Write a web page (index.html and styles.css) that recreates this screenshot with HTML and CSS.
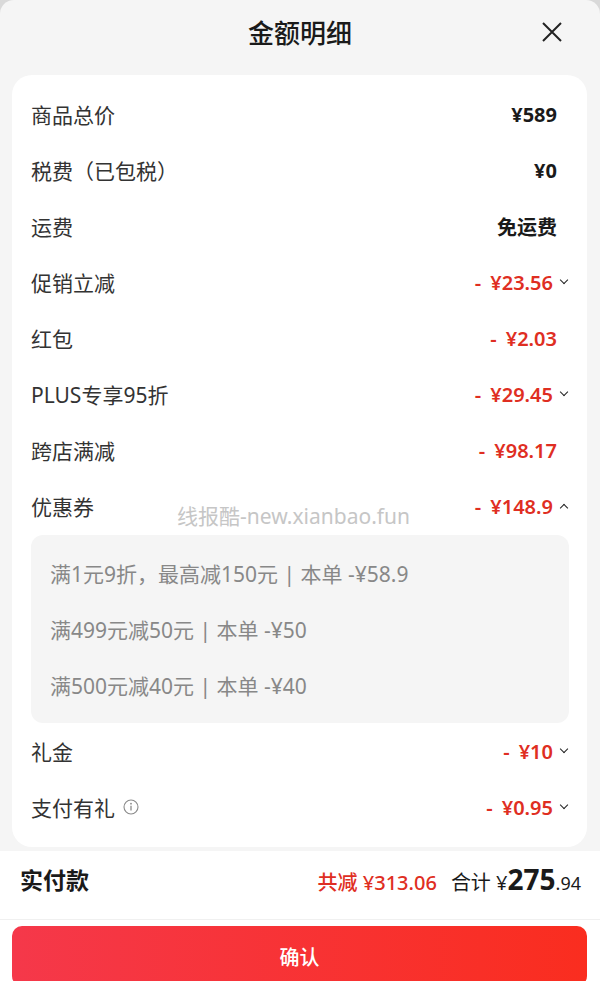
FILE: index.html
```html
<!DOCTYPE html>
<html lang="zh-CN">
<head>
  <meta charset="UTF-8">
  <title>金额明细</title>
  <link rel="stylesheet" href="styles.css">
</head>
<body>
  <div class="sheet">
    <div class="header">
      <h1>金额明细</h1>
      <span class="close">
        <svg width="22" height="22" viewBox="0 0 22 22"><path d="M2 2L20 20M20 2L2 20" stroke="#222" stroke-width="2" fill="none"/></svg>
      </span>
    </div>

    <div class="card">
      <div class="row">
        <span class="label">商品总价</span>
        <span class="value">¥589</span>
      </div>
      <div class="row">
        <span class="label">税费（已包税）</span>
        <span class="value">¥0</span>
      </div>
      <div class="row">
        <span class="label">运费</span>
        <span class="value">免运费</span>
      </div>
      <div class="row">
        <span class="label">促销立减</span>
        <span class="value red"><em>-</em>¥23.56<i class="arrow down"></i></span>
      </div>
      <div class="row">
        <span class="label">红包</span>
        <span class="value red"><em>-</em>¥2.03</span>
      </div>
      <div class="row">
        <span class="label">PLUS专享95折</span>
        <span class="value red"><em>-</em>¥29.45<i class="arrow down"></i></span>
      </div>
      <div class="row">
        <span class="label">跨店满减</span>
        <span class="value red"><em>-</em>¥98.17</span>
      </div>
      <div class="row">
        <span class="label">优惠券</span>
        <span class="value red"><em>-</em>¥148.9<i class="arrow up"></i></span>
      </div>
      <div class="coupons">
        <div class="coupon">满1元9折，最高减150元 | 本单 -¥58.9</div>
        <div class="coupon">满499元减50元 | 本单 -¥50</div>
        <div class="coupon">满500元减40元 | 本单 -¥40</div>
      </div>
      <div class="row">
        <span class="label">礼金</span>
        <span class="value red"><em>-</em>¥10<i class="arrow down"></i></span>
      </div>
      <div class="row">
        <span class="label">支付有礼
          <svg class="info" width="16" height="16" viewBox="0 0 16 16"><circle cx="8" cy="8" r="7" stroke="#8a8a8a" stroke-width="1.1" fill="none"/><circle cx="8" cy="4.7" r="0.9" fill="#8a8a8a"/><path d="M8 6.8V11.6" stroke="#8a8a8a" stroke-width="1.3"/></svg>
        </span>
        <span class="value red"><em>-</em>¥0.95<i class="arrow down"></i></span>
      </div>
      <div class="watermark">线报酷-new.xianbao.fun</div>
    </div>

    <div class="footer">
      <div class="total">
        <span class="total-title">实付款</span>
        <span class="total-right">
          <span class="saved">共减 ¥313.06</span>
          <span class="sum">合计 ¥<b>275</b><small>.94</small></span>
        </span>
      </div>
      <button class="confirm">确认</button>
    </div>
  </div>
</body>
</html>
```

FILE: styles.css
```css
body {
  margin: 0;
  background: #d9d9d9;
  font-family: 'Noto Sans', 'Noto Sans CJK SC', sans-serif;
  color: #222;
}
.sheet {
  background: #f5f5f5;
  border-radius: 14px 14px 0 0;
  height: 981px;
  overflow: hidden;
}
.header {
  height: 63px;
  margin-bottom: 12px;
  display: flex;
  align-items: center;
  justify-content: center;
  position: relative;
}
.header h1 {
  margin: 0;
  font-size: 26px;
  font-weight: 500;
  color: #1a1a1a;
}
.close {
  position: absolute;
  right: 37px;
  top: 21px;
  line-height: 0;
}
.card {
  position: relative;
  background: #fff;
  margin: 0 13px 4px 12px;
  border-radius: 20px;
  padding: 11px 18px 12px 19px;
}
.row {
  height: 56px;
  display: flex;
  align-items: center;
  justify-content: space-between;
}
.label {
  font-size: 21px;
  color: #333;
  display: flex;
  align-items: center;
}
.info {
  margin-left: 8px;
}
.value {
  font-size: 20px;
  font-weight: 700;
  color: #1a1a1a;
  margin-right: 12px;
  display: flex;
  align-items: center;
}
.value.red {
  color: #df2e22;
  font-weight: 600;
}
.value em {
  font-style: normal;
  margin-right: 9px;
}
.arrow {
  width: 5px;
  height: 5px;
  border-right: 1.6px solid #222;
  border-bottom: 1.6px solid #222;
  margin-left: 8px;
  margin-right: -16px;
}
.arrow.down {
  transform: rotate(45deg);
  margin-top: -5px;
}
.arrow.up {
  transform: rotate(-135deg);
  margin-top: 3px;
}
.value:has(.arrow) {
  margin-right: 18px;
}
.coupons {
  background: #f5f5f5;
  border-radius: 12px;
  padding: 10px 19px;
  margin: 1px 0 0;
}
.coupon {
  height: 56px;
  display: flex;
  align-items: center;
  font-size: 21px;
  color: #888;
}
.watermark {
  position: absolute;
  left: 165px;
  top: 425px;
  font-size: 21px;
  color: #c6c6c6;
}
.footer {
  background: #fff;
}
.total {
  height: 56px;
  padding: 0 19px 12px 20px;
  border-bottom: 1px solid #f0f0f0;
  display: flex;
  align-items: center;
  justify-content: space-between;
}
.total-title {
  font-size: 23px;
  font-weight: 700;
  color: #1a1a1a;
}
.total-right {
  display: flex;
  align-items: baseline;
}
.saved {
  color: #df2e22;
  font-size: 20px;
  font-weight: 500;
  margin-right: 14px;
}
.sum {
  font-size: 20px;
  color: #1a1a1a;
}
.sum b {
  font-size: 28px;
  font-weight: 700;
}
.sum small {
  font-size: 18px;
}
.confirm {
  display: block;
  width: 575px;
  height: 60px;
  margin: 6px 0 0 12px;
  border: none;
  border-radius: 10px;
  background: linear-gradient(90deg, #f5384a, #fa2d1f);
  color: #fff;
  font-family: 'Noto Sans CJK SC', sans-serif;
  font-size: 20px;
  font-weight: 500;
}
```
